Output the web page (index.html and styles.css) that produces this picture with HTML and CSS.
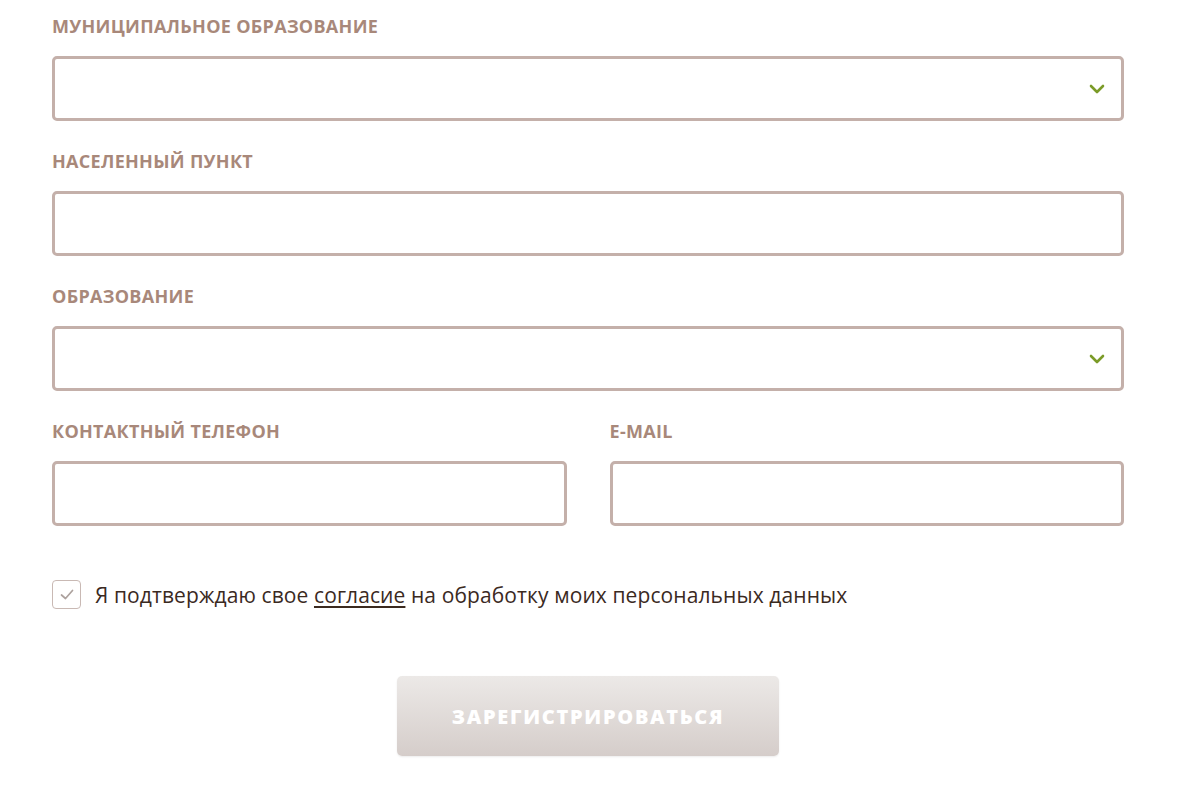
FILE: index.html
```html
<!DOCTYPE html>
<html lang="ru">
<head>
<meta charset="utf-8">
<link rel="stylesheet" href="styles.css">
</head>
<body>
<form class="form">
  <div class="field">
    <label class="label">Муниципальное образование</label>
    <div class="control select">
      <svg class="chev" width="16" height="10" viewBox="0 0 16 10"><path d="M2 2 L8 8 L14 2" fill="none" stroke="#7b9b28" stroke-width="2.6" stroke-linecap="round" stroke-linejoin="round"/></svg>
    </div>
  </div>
  <div class="field">
    <label class="label">Населенный пункт</label>
    <div class="control"></div>
  </div>
  <div class="field">
    <label class="label">Образование</label>
    <div class="control select">
      <svg class="chev" width="16" height="10" viewBox="0 0 16 10"><path d="M2 2 L8 8 L14 2" fill="none" stroke="#7b9b28" stroke-width="2.6" stroke-linecap="round" stroke-linejoin="round"/></svg>
    </div>
  </div>
  <div class="row">
    <div class="field">
      <label class="label">Контактный телефон</label>
      <div class="control"></div>
    </div>
    <div class="field">
      <label class="label">E-mail</label>
      <div class="control"></div>
    </div>
  </div>
  <div class="agree">
    <span class="box"><svg width="16" height="13" viewBox="0 0 16 13"><path d="M2.5 7 L6.5 10.5 L13.5 2.5" fill="none" stroke="#ada29e" stroke-width="1.7" stroke-linecap="round" stroke-linejoin="round"/></svg></span>
    <span class="agree-text">Я подтверждаю свое <u>согласие</u> на обработку моих персональных данных</span>
  </div>
  <div class="actions">
    <button type="button" class="btn">Зарегистрироваться</button>
  </div>
</form>
</body>
</html>
```
FILE: styles.css
```css
* { box-sizing: border-box; }
html, body { margin: 0; background: #fff; }
body { width: 1200px; height: 800px; overflow: hidden; }
.form {
  padding: 16px 76px 0 52px;
  display: flex;
  flex-direction: column;
}
.field { display: flex; flex-direction: column; margin-bottom: 30px; }
.label {
  font-family: "Open Sans", "Noto Sans", sans-serif;
  font-weight: 700;
  font-size: 18px;
  line-height: 20px;
  text-transform: uppercase;
  color: #a8887a;
  letter-spacing: 0.3px;
  margin-bottom: 20px;
}
.control {
  height: 65px;
  border: 3px solid #c4b0aa;
  border-radius: 5px;
  background: #fff;
  display: flex;
  align-items: center;
  justify-content: flex-end;
  padding-right: 16px;
}
.chev { display: block; }
.row { display: grid; grid-template-columns: 1fr 1fr; column-gap: 43px; }
.agree {
  margin-top: 24px;
  display: flex;
  align-items: center;
  gap: 14px;
}
.box {
  width: 29px; height: 29px;
  border: 1.5px solid #c9b9b4;
  border-radius: 4px;
  display: flex; align-items: center; justify-content: center;
}
.agree-text {
  font-family: "Open Sans", sans-serif;
  font-size: 21px;
  line-height: 28px;
  letter-spacing: 0.1px;
  color: #3b2a1f;
}
.agree-text u { text-underline-offset: 3px; text-decoration-thickness: 1.5px; }
.actions { display: flex; justify-content: center; margin-top: 67px; }
.btn {
  width: 382px; height: 80px;
  border: none;
  border-radius: 5px;
  background: linear-gradient(#ece9e7, #d5cdca);
  box-shadow: 0 1px 2px rgba(0,0,0,0.08);
  color: #fff;
  font-family: "Open Sans", "Noto Sans", sans-serif;
  font-weight: 800;
  font-size: 20px;
  letter-spacing: 1.7px;
  text-transform: uppercase;
}
```
